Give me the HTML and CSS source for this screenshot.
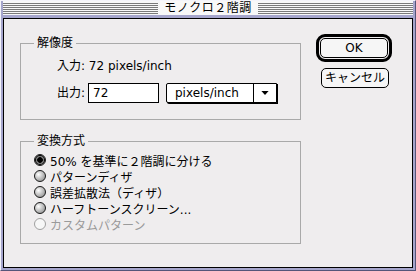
FILE: index.html
```html
<!DOCTYPE html>
<html>

<head>
  <meta charset="utf-8">
  <title>モノクロ２階調</title>
  <link rel="stylesheet" href="styles.css">
</head>

<body>
  <div class="window">
    <div class="titlebar">
      <div class="stripes"></div>
      <div class="title">モノクロ２階調</div>
      <div class="stripes"></div>
    </div>

    <div class="content">
      <div class="groups">
        <fieldset class="group res">
          <legend>解像度</legend>
          <div class="row">入力: 72 pixels/inch</div>
          <div class="row field-row">
            <span class="field-label">出力:</span>
            <div class="textbox">72</div>
            <div class="popup">
              <span class="popup-label">pixels/inch</span>
              <span class="popup-arrow">
                <svg width="9" height="5" viewBox="0 0 9 5"><path d="M0 0H9L4.5 5Z" fill="#000"/></svg>
              </span>
            </div>
          </div>
        </fieldset>

        <fieldset class="group mode">
          <legend>変換方式</legend>
          <div class="radio"><span class="dot checked"></span>50% を基準に２階調に分ける</div>
          <div class="radio"><span class="dot"></span>パターンディザ</div>
          <div class="radio"><span class="dot"></span>誤差拡散法（ディザ）</div>
          <div class="radio"><span class="dot"></span>ハーフトーンスクリーン...</div>
          <div class="radio disabled"><span class="dot"></span>カスタムパターン</div>
        </fieldset>
      </div>

      <div class="buttons">
        <div class="default-ring">
          <div class="btn">OK</div>
        </div>
        <div class="btn cancel">キャンセル</div>
      </div>
    </div>
  </div>
</body>

</html>
```

FILE: styles.css
```css
body {
  margin: 0;
  font-family: "DejaVu Sans", "Noto Sans CJK JP", sans-serif;
  font-size: 12px;
  color: #000;
  background: #a5a5cc;
}

/* window frame */
.window {
  width: 416px;
  height: 271px;
  box-sizing: border-box;
  display: flex;
  flex-direction: column;
  padding: 0 2px 2px 2px;
  background: #a5a5cc;
  border-top: 1px solid #f4f4fa;
  border-left: 1px solid #f4f4fa;
  border-right: 1px solid #55557a;
  border-bottom: 1px solid #55557a;
}

.titlebar {
  height: 14px;
  margin-bottom: 3px;
  display: flex;
  background: #f8f8f8;
}

.stripes {
  flex: 1;
  height: 11px;
  margin-top: 2px;
  background: repeating-linear-gradient(to bottom, #7a7a7a 0 1px, transparent 1px 2px);
}

.title {
  padding: 0 6px;
  line-height: 14px;
  letter-spacing: 0.5px;
}

.content {
  flex: 1;
  display: flex;
  align-items: flex-start;
  border: 1px solid #000;
  background: #efedee;
  padding: 17px 0 0 16px;
}

/* group boxes */
.groups {
  width: 281px;
}

.group {
  margin: 0;
  min-width: 0;
  border: 1px solid #a9a9a9;
  padding: 0 0 0 13px;
}

.group legend {
  padding: 0 3px;
  line-height: 14px;
}

.res {
  padding-top: 8px;
  padding-bottom: 16px;
}

.res .row {
  margin-left: 23px;
  line-height: 16px;
}

.field-row {
  display: flex;
  align-items: center;
  margin-top: 9px;
}

.field-label {
  width: 31px;
}

.textbox {
  width: 71px;
  height: 20px;
  box-sizing: border-box;
  border: 1px solid #000;
  background: #fff;
  padding-left: 4px;
  line-height: 18px;
}

.popup {
  width: 111px;
  height: 20px;
  box-sizing: border-box;
  margin-left: 7px;
  display: flex;
  border: 1px solid #000;
  border-radius: 2px 0 0 2px;
  box-shadow: 1px 1px 0 #000;
  background: #fff;
}

.popup-label {
  flex: 1;
  padding-left: 8px;
  line-height: 18px;
}

.popup-arrow {
  width: 22px;
  display: flex;
  align-items: center;
  justify-content: center;
  border-left: 1px solid #000;
}

.popup-arrow svg {
  width: 8px;
  height: 4px;
}

.mode {
  margin-top: 14px;
  padding-top: 4px;
  padding-bottom: 11px;
}

.radio {
  display: flex;
  align-items: center;
  gap: 4px;
  height: 16px;
}

.dot {
  width: 12px;
  height: 12px;
  box-sizing: border-box;
  border-radius: 50%;
  border: 1px solid #1a1a1a;
  background: radial-gradient(circle at 35% 35%, #fff 0, #d0d0d0 35%, #808080 100%);
}

.dot.checked {
  background: radial-gradient(circle, #000 0 2.5px, #6a6a6a 3px, #c8c8c8 5px);
  box-shadow: inset 0 0 0 1px #000;
}

.radio.disabled {
  color: #9a9a9a;
}

.radio.disabled .dot {
  border-color: #a0a0a0;
  background: #f7f7f7;
}

/* buttons */
.buttons {
  margin-left: 15px;
  margin-top: -2px;
}

.default-ring {
  width: 76px;
  height: 28px;
  box-sizing: border-box;
  border: 3px solid #000;
  border-radius: 9px;
  padding: 1px;
}

.btn {
  height: 20px;
  box-sizing: border-box;
  border: 1px solid #000;
  border-radius: 5px;
  background: #f6f6f6;
  text-align: center;
  line-height: 18px;
}

.cancel {
  width: 68px;
  margin: 6px 0 0 5px;
}
```
